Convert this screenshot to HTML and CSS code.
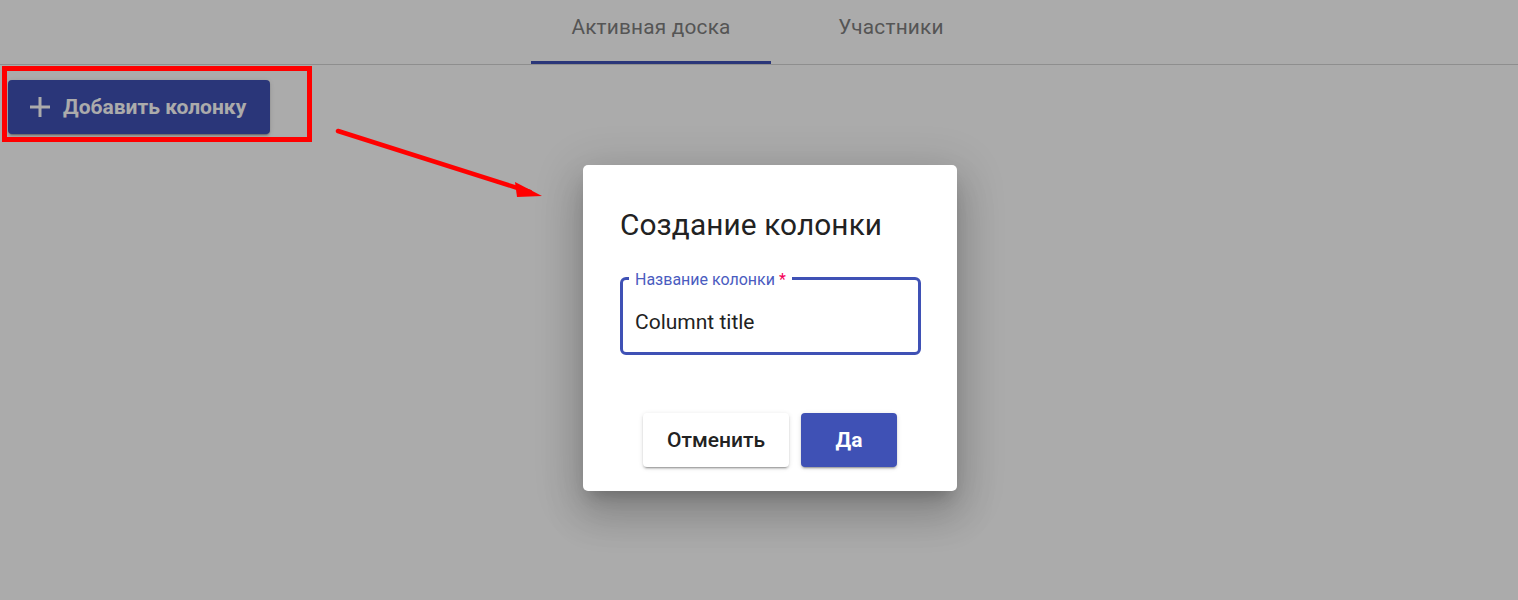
FILE: index.html
```html
<!DOCTYPE html>
<html lang="ru">
<head>
<meta charset="utf-8">
<title>Доска</title>
<link rel="stylesheet" href="styles.css">
</head>
<body>
<div class="page">
  <nav class="tabs">
    <div class="tab tab-active">Активная доска</div>
    <div class="tab">Участники</div>
  </nav>
  <div class="toolbar">
    <button class="add-btn" type="button">
      <svg class="plus" width="22" height="22" viewBox="0 0 22 22"><path d="M11 1v20M1 11h20" stroke="currentColor" stroke-width="3" fill="none"/></svg>
      <span>Добавить колонку</span>
    </button>
  </div>
</div>

<div class="backdrop"></div>

<div class="annot-rect"></div>
<svg class="annot-arrow" width="240" height="100" viewBox="0 0 240 100">
  <line x1="3" y1="3" x2="195" y2="64" stroke="#ff0000" stroke-width="4.5" stroke-linecap="round"/>
  <polygon points="207,68 180,54 182,69" fill="#ff0000"/>
</svg>

<div class="dialog" role="dialog">
  <h2 class="dialog-title">Создание колонки</h2>
  <div class="field">
    <fieldset class="outline"><legend class="legend"><span>Название колонки *</span></legend></fieldset>
    <label class="label">Название колонки <span class="req">*</span></label>
    <div class="input">Columnt title</div>
  </div>
  <div class="actions">
    <button class="btn btn-cancel" type="button">Отменить</button>
    <button class="btn btn-ok" type="button">Да</button>
  </div>
</div>
</body>
</html>
```

FILE: styles.css
```css
* { box-sizing: border-box; }
html, body { margin: 0; padding: 0; }
body {
  width: 1518px;
  height: 600px;
  overflow: hidden;
  background: #ffffff;
  font-family: Roboto, "Noto Sans", Arial, sans-serif;
  position: relative;
}
.page { width: 100%; }
.tabs {
  display: flex;
  justify-content: center;
  padding-left: 24px;
  height: 65px;
  border-bottom: 1px solid #d4d4d4;
}
.tab {
  width: 240px;
  height: 64px;
  display: flex;
  align-items: flex-start;
  justify-content: center;
  padding-top: 15px;
  font-size: 20.8px;
  font-weight: 400;
  color: #7f7f7f;
  letter-spacing: 0.2px;
}
.tab-active {
  border-bottom: 3px solid #3f51b5;
  height: 64px;
}
.toolbar {
  padding: 15px 0 0 8px;
}
.add-btn {
  display: flex;
  align-items: center;
  gap: 12px;
  height: 54px;
  width: 262px;
  padding: 0 0 0 21px;
  border: none;
  border-radius: 4px;
  background: #3f51b5;
  color: #ffffff;
  font-family: Roboto, Arial, sans-serif;
  font-size: 21px;
  font-weight: 700;
  box-shadow: 0 3px 1px -2px rgba(0,0,0,.2), 0 2px 2px rgba(0,0,0,.14), 0 1px 5px rgba(0,0,0,.12);
}
.plus { display: block; }
.backdrop {
  position: absolute;
  inset: 0;
  background: rgba(0,0,0,0.33);
}
.annot-rect {
  position: absolute;
  left: 2px;
  top: 66px;
  width: 310px;
  height: 76px;
  border: 5px solid #ff0000;
}
.annot-arrow {
  position: absolute;
  left: 335px;
  top: 128px;
}
.dialog {
  position: absolute;
  left: 583px;
  top: 165px;
  width: 374px;
  height: 326px;
  background: #ffffff;
  border-radius: 5px;
  padding: 39px 37px 0 37px;
  box-shadow: 0 11px 15px -7px rgba(0,0,0,.2), 0 24px 38px 3px rgba(0,0,0,.14), 0 9px 46px 8px rgba(0,0,0,.12);
}
.dialog-title {
  margin: 0;
  font-size: 29.8px;
  font-weight: 400;
  line-height: 42px;
  color: #222222;
  letter-spacing: 0.1px;
}
.field {
  position: relative;
  margin-top: 33px;
  height: 76px;
  width: 301px;
}
.outline {
  position: absolute;
  inset: -9px 0 0 0;
  margin: 0;
  padding: 0 6px;
  border: 3px solid #3f51b5;
  border-radius: 6px;
}
.legend {
  padding: 0;
  font-size: 16px;
  line-height: 16px;
  height: 16px;
  visibility: hidden;
}
.legend span { padding: 0 6px; display: inline-block; }
.label {
  position: absolute;
  left: 15px;
  top: -7px;
  font-size: 16px;
  line-height: 16px;
  color: #4a5cc0;
}
.req { color: #f50057; }
.input {
  padding: 31px 0 0 15px;
  font-size: 21px;
  line-height: 24px;
  color: #222222;
}
.actions {
  display: flex;
  justify-content: center;
  gap: 12px;
  margin-top: 58px;
}
.btn {
  height: 54px;
  border: none;
  border-radius: 4px;
  font-family: Roboto, Arial, sans-serif;
  font-size: 21px;
  box-shadow: 0 3px 1px -2px rgba(0,0,0,.2), 0 2px 2px rgba(0,0,0,.14), 0 1px 5px rgba(0,0,0,.12);
}
.btn-cancel {
  width: 146px;
  background: #ffffff;
  color: #222222;
  font-weight: 500;
}
.btn-ok {
  width: 96px;
  background: #3f51b5;
  color: #ffffff;
  font-weight: 700;
}
```
